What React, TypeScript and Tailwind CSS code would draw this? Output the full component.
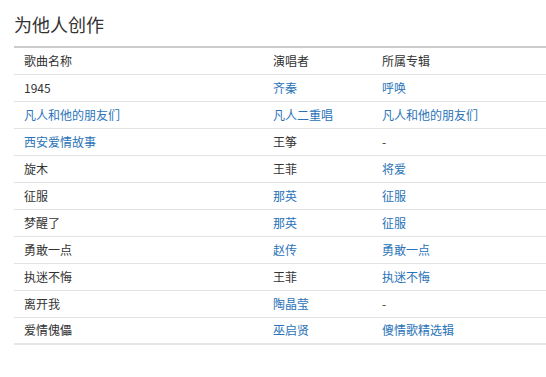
import * as React from "react";

type Cell = { text: string; link?: boolean };
type Row = [Cell, Cell, Cell];

const ROWS: Row[] = [
  [{ text: "1945" }, { text: "齐秦", link: true }, { text: "呼唤", link: true }],
  [
    { text: "凡人和他的朋友们", link: true },
    { text: "凡人二重唱", link: true },
    { text: "凡人和他的朋友们", link: true },
  ],
  [{ text: "西安爱情故事", link: true }, { text: "王筝" }, { text: "-" }],
  [{ text: "旋木" }, { text: "王菲" }, { text: "将爱", link: true }],
  [{ text: "征服" }, { text: "那英", link: true }, { text: "征服", link: true }],
  [{ text: "梦醒了" }, { text: "那英", link: true }, { text: "征服", link: true }],
  [{ text: "勇敢一点" }, { text: "赵传", link: true }, { text: "勇敢一点", link: true }],
  [{ text: "执迷不悔" }, { text: "王菲" }, { text: "执迷不悔", link: true }],
  [{ text: "离开我" }, { text: "陶晶莹", link: true }, { text: "-" }],
  [{ text: "爱情傀儡" }, { text: "巫启贤", link: true }, { text: "傻情歌精选辑", link: true }],
];

function CellText({ cell }: { cell: Cell }) {
  return cell.link ? (
    <a className="text-[#2a73b8] no-underline">{cell.text}</a>
  ) : (
    <span>{cell.text}</span>
  );
}

export default function App() {
  return (
    <div
      className="min-h-screen bg-white pl-[14px] text-[#333]"
      style={{ fontFamily: '"Noto Sans CJK SC", "Noto Sans", sans-serif' }}
    >
      <h2 className="pt-[14px] text-[18px] leading-[20px] font-normal text-[#333]">为他人创作</h2>
      <table className="mt-[12px] w-[532px] table-fixed border-collapse text-[12px] leading-[14px]">
        <colgroup>
          <col className="w-[249px]" />
          <col className="w-[109px]" />
          <col />
        </colgroup>
        <thead>
          <tr className="border-t-2 border-b border-t-[#cccccc] border-b-[#e3e3e3]">
            <th className="h-[27px] px-[10px] py-0 text-left font-normal">歌曲名称</th>
            <th className="h-[27px] px-[10px] py-0 text-left font-normal">演唱者</th>
            <th className="h-[27px] px-[10px] py-0 text-left font-normal">所属专辑</th>
          </tr>
        </thead>
        <tbody>
          {ROWS.map((row, i) => (
            <tr
              key={i}
              className={
                i === ROWS.length - 1
                  ? "border-b-2 border-b-[#e5e5e5]"
                  : "border-b border-b-[#e3e3e3]"
              }
            >
              {row.map((cell, j) => (
                <td key={j} className="h-[27px] px-[10px] py-0">
                  <CellText cell={cell} />
                </td>
              ))}
            </tr>
          ))}
        </tbody>
      </table>
    </div>
  );
}
